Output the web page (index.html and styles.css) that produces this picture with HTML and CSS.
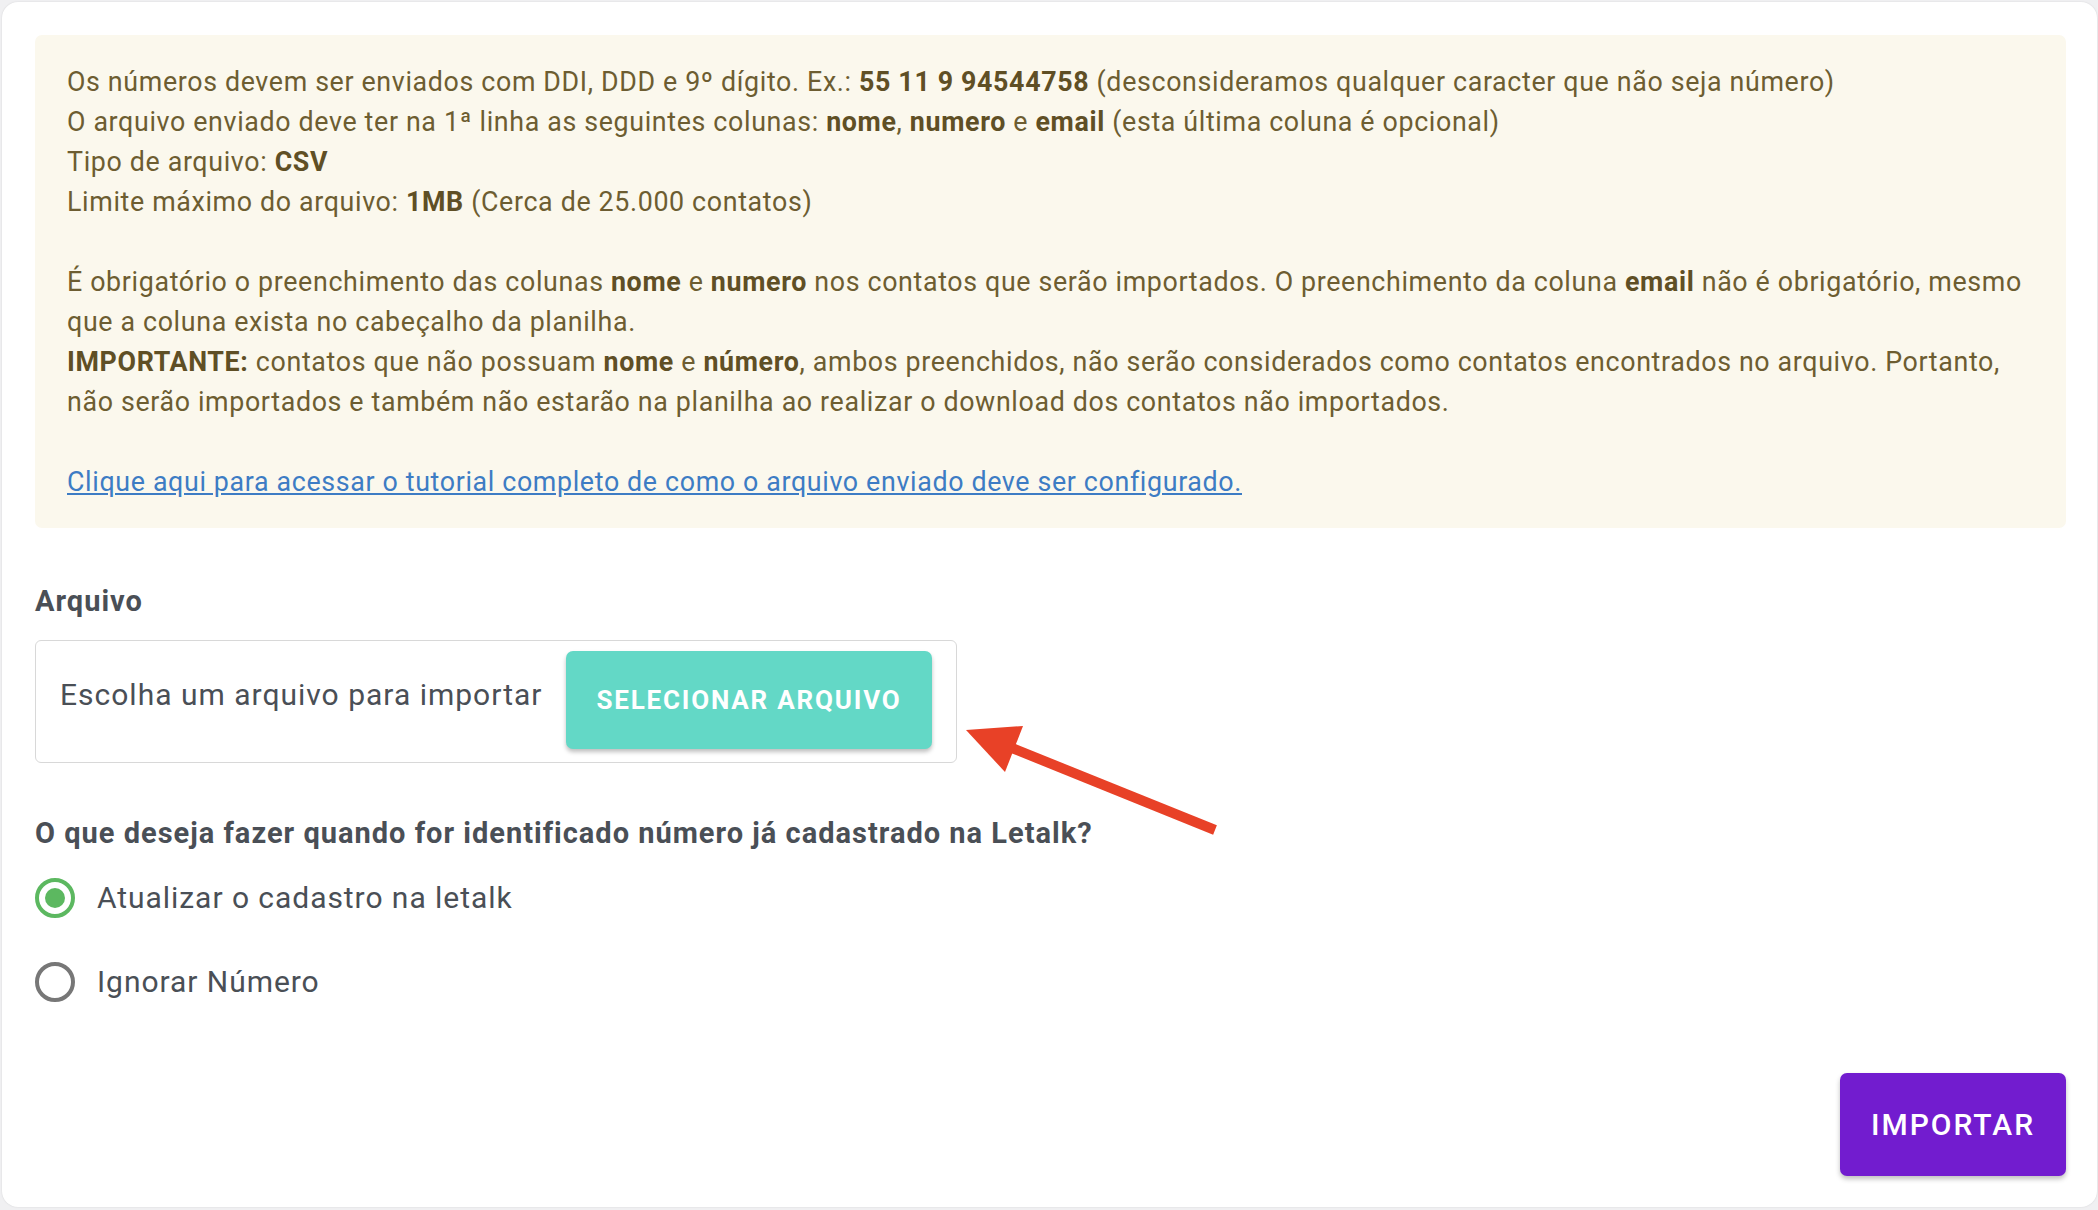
FILE: index.html
```html
<!DOCTYPE html>
<html lang="pt-BR">
<head>
    <meta charset="UTF-8">
    <title>Importar contatos</title>
    <link rel="stylesheet" href="styles.css">
</head>
<body>
    <div class="card">
        <div class="notice">
            <p>Os números devem ser enviados com DDI, DDD e 9º dígito. Ex.: <b>55 11 9 94544758</b> (desconsideramos qualquer caracter que não seja número)<br>
            O arquivo enviado deve ter na 1ª linha as seguintes colunas: <b>nome</b>, <b>numero</b> e <b>email</b> (esta última coluna é opcional)<br>
            Tipo de arquivo: <b>CSV</b><br>
            Limite máximo do arquivo: <b>1MB</b> (Cerca de 25.000 contatos)</p>

            <p>É obrigatório o preenchimento das colunas <b>nome</b> e <b>numero</b> nos contatos que serão importados. O preenchimento da coluna <b>email</b> não é obrigatório, mesmo que a coluna exista no cabeçalho da planilha.<br>
            <b>IMPORTANTE:</b> contatos que não possuam <b>nome</b> e <b>número</b>, ambos preenchidos, não serão considerados como contatos encontrados no arquivo. Portanto, não serão importados e também não estarão na planilha ao realizar o download dos contatos não importados.</p>

            <p><a href="#">Clique aqui para acessar o tutorial completo de como o arquivo enviado deve ser configurado.</a></p>
        </div>

        <div class="label">Arquivo</div>
        <div class="file-box">
            <span class="placeholder">Escolha um arquivo para importar</span>
            <button class="btn-select">SELECIONAR ARQUIVO</button>
        </div>

        <div class="question">O que deseja fazer quando for identificado número já cadastrado na Letalk?</div>
        <label class="radio checked"><span class="dot"></span>Atualizar o cadastro na letalk</label>
        <label class="radio"><span class="dot"></span>Ignorar Número</label>

        <div class="actions">
            <button class="btn-import">IMPORTAR</button>
        </div>

        <svg class="arrow" viewBox="0 0 270 120" width="270" height="120">
            <line x1="52" y1="28" x2="255" y2="110"/>
            <polygon points="6,10 63,6 45,52"/>
        </svg>
    </div>
</body>
</html>
```

FILE: styles.css
```css
*{
    box-sizing: border-box;
}

body{
    margin: 0;
    background: #f0f0f2;
    font-family: Roboto, "Noto Sans", sans-serif;
    color: #4a4f56;
}

.card{
    position: relative;
    margin: 2px 1px 3px 2px;
    min-height: 1205px;
    background: #fff;
    border-radius: 16px;
    padding: 33px 31px 31px 33px;
    display: flex;
    flex-direction: column;
    align-items: flex-start;
    box-shadow: 0 0 2px rgba(0,0,0,.12);
}

.notice{
    align-self: stretch;
    background: #fbf8ed;
    border-radius: 7px;
    padding: 27px 32px 26px;
    color: #6d5d31;
    font-size: 26.8px;
    line-height: 40px;
    letter-spacing: .65px;
}

.notice p{
    margin: 0 0 40px;
}

.notice p:last-child{
    margin: 0;
}

.notice b{
    color: #5f4f25;
}

.notice a{
    color: #3d7cc4;
}

.label{
    margin-top: 55px;
    font-size: 29px;
    font-weight: bold;
    letter-spacing: 1px;
    line-height: 36px;
}

.file-box{
    margin-top: 21px;
    width: 922px;
    height: 123px;
    border: 1.5px solid #d8d8d8;
    border-radius: 6px;
    display: flex;
    align-items: center;
    padding: 0 24px 0 24px;
    gap: 20px;
}

.placeholder{
    font-size: 30px;
    letter-spacing: 1px;
    margin-top: -14px;
    flex: 1;
}

.btn-select{
    width: 366px;
    height: 98px;
    margin-top: -4px;
    border: none;
    border-radius: 7px;
    background: #63d8c6;
    color: #fff;
    font-family: inherit;
    font-size: 26px;
    font-weight: bold;
    letter-spacing: 1.8px;
    box-shadow: 0 3px 4px rgba(0,0,0,.25);
}

.question{
    margin-top: 52px;
    font-size: 29px;
    font-weight: bold;
    letter-spacing: 1px;
    line-height: 36px;
}

.radio{
    display: flex;
    align-items: center;
    gap: 22px;
    font-size: 30px;
    letter-spacing: .95px;
    line-height: 40px;
    margin-top: 27px;
}

.radio + .radio{
    margin-top: 44px;
}

.dot{
    width: 40px;
    height: 40px;
    border: 4px solid #777;
    border-radius: 50%;
    display: flex;
    align-items: center;
    justify-content: center;
}

.radio.checked .dot{
    border-color: #5cb860;
}

.radio.checked .dot::after{
    content: '';
    width: 20px;
    height: 20px;
    border-radius: 50%;
    background: #5cb860;
}

.actions{
    margin-top: auto;
    align-self: flex-end;
}

.btn-import{
    width: 226px;
    height: 103px;
    border: none;
    border-radius: 7px;
    background: #721ccf;
    color: #fff;
    font-family: inherit;
    font-size: 30px;
    font-weight: 500;
    letter-spacing: 2px;
    box-shadow: 0 3px 5px rgba(0,0,0,.25);
}

/* seta vermelha de anotação sobre o formulário */
.arrow{
    position: absolute;
    left: 958px;
    top: 718px;
}

.arrow line{
    stroke: #e84127;
    stroke-width: 10;
}

.arrow polygon{
    fill: #e84127;
}
```
